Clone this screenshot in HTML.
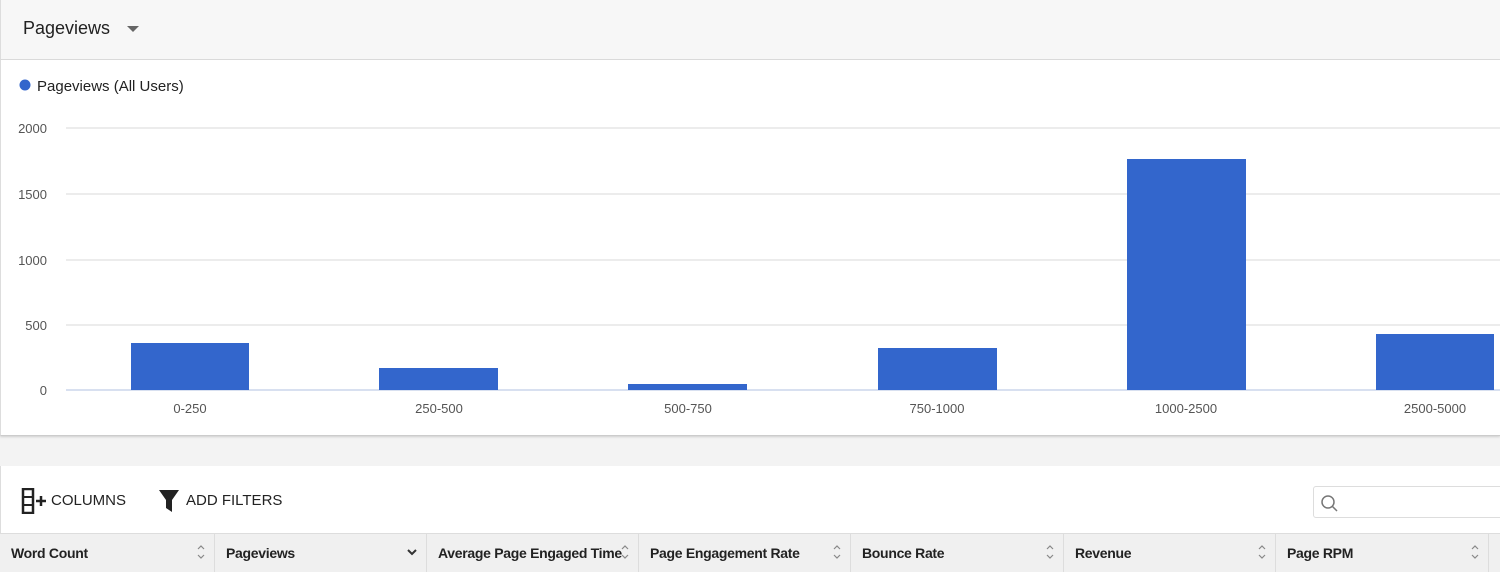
<!DOCTYPE html>
<html><head><style>
*{box-sizing:border-box;margin:0;padding:0}
html,body{width:1500px;height:572px;overflow:hidden}
body{background:#f3f3f3;font-family:"Liberation Sans",sans-serif;position:relative;color:#222}
.top{position:absolute;left:0;top:0;width:1500px;height:60px;background:#f7f7f7;border-bottom:1px solid #ddd;border-left:1px solid #ddd}
.top span{position:absolute;left:22px;top:18px;font-size:18px;color:#222}
.tri{position:absolute;left:126px;top:26px;width:0;height:0;border-left:6px solid transparent;border-right:6px solid transparent;border-top:6px solid #666}
.chart{position:absolute;left:0;top:60px;width:1500px;height:376px;background:#fff;border-bottom:1px solid #ccc;border-left:1px solid #ddd;box-shadow:0 1px 2px rgba(0,0,0,.15)}
.card{position:absolute;left:0;top:466px;width:1500px;height:106px;background:#fff;border-left:1px solid #ddd}
.hdr{position:absolute;left:0;top:533px;width:1500px;height:39px;background:#f0f0f0;border-top:1px solid #ddd;overflow:hidden}
.col{position:absolute;top:0;height:39px;border-right:1px solid #ddd;font-size:14px;font-weight:bold;padding:11px 11px;color:#222;white-space:nowrap;overflow:hidden;letter-spacing:-0.3px}
.ar{position:absolute;right:9px;top:10px}
.btn{position:absolute;top:492px;font-size:15px;color:#222}
.search{position:absolute;left:1313px;top:486px;width:200px;height:32px;border:1px solid #ddd;border-radius:3px;background:#fff}
</style></head><body>
<div class="top"><span>Pageviews</span><div class="tri"></div></div>
<div class="chart">
<svg width="1500" height="376" style="position:absolute;left:0;top:0">
<circle cx="24" cy="25" r="5.5" fill="#3366cc"/>
<text x="36" y="31" font-size="15" fill="#222" font-family="Liberation Sans">Pageviews (All Users)</text>
<g stroke="#e6e6e6" stroke-width="1.5">
<line x1="65" y1="68" x2="1500" y2="68"/><line x1="65" y1="134" x2="1500" y2="134"/><line x1="65" y1="200" x2="1500" y2="200"/><line x1="65" y1="265" x2="1500" y2="265"/></g>
<line x1="65" y1="330" x2="1500" y2="330" stroke="#ccd6eb" stroke-width="1.5"/>
<g font-size="13" fill="#555" font-family="Liberation Sans" text-anchor="end">
<text x="46" y="73">2000</text><text x="46" y="139">1500</text><text x="46" y="205">1000</text><text x="46" y="270">500</text><text x="46" y="335">0</text></g>
<g fill="#3366cc">
<rect x="130" y="283" width="118" height="47"/><rect x="378" y="308" width="119" height="22"/><rect x="627" y="324" width="119" height="6"/><rect x="877" y="288" width="119" height="42"/><rect x="1126" y="99" width="119" height="231"/><rect x="1375" y="274" width="118" height="56"/></g>
<g font-size="13" fill="#555" font-family="Liberation Sans" text-anchor="middle">
<text x="189" y="353">0-250</text><text x="438" y="353">250-500</text><text x="687" y="353">500-750</text><text x="936" y="353">750-1000</text><text x="1185" y="353">1000-2500</text><text x="1434" y="353">2500-5000</text></g>
</svg></div>
<div class="card"></div>
<svg style="position:absolute;left:20px;top:488px" width="30" height="26"><rect x="3" y="1" width="10" height="24" fill="none" stroke="#222" stroke-width="2.5"/><line x1="3" y1="9" x2="13" y2="9" stroke="#222" stroke-width="2"/><line x1="3" y1="17" x2="13" y2="17" stroke="#222" stroke-width="2"/><path d="M16 13h10M21 8v10" stroke="#222" stroke-width="2.5"/></svg>
<div class="btn" style="left:51px">COLUMNS</div>
<svg style="position:absolute;left:158px;top:489px" width="22" height="24"><path d="M1 1h20l-7 10v12l-6-4v-8z" fill="#222"/></svg>
<div class="btn" style="left:186px">ADD FILTERS</div>
<div class="search"><svg width="20" height="20" style="position:absolute;left:6px;top:7px"><circle cx="8" cy="8" r="6" fill="none" stroke="#777" stroke-width="1.5"/><line x1="12" y1="12" x2="17" y2="17" stroke="#777" stroke-width="1.5"/></svg></div>
<div class="hdr">
<div class="col" style="left:0;width:215px">Word Count<svg class="ar" width="8" height="16"><path d="M1 5l3-3 3 3M1 11l3 3 3-3" fill="none" stroke="#888" stroke-width="1.2"/></svg></div>
<div class="col" style="left:215px;width:212px">Pageviews<svg class="ar" width="10" height="16"><path d="M1 6l4 4 4-4" fill="none" stroke="#333" stroke-width="2"/></svg></div>
<div class="col" style="left:427px;width:212px">Average Page Engaged Time<svg class="ar" width="8" height="16"><path d="M1 5l3-3 3 3M1 11l3 3 3-3" fill="none" stroke="#888" stroke-width="1.2"/></svg></div>
<div class="col" style="left:639px;width:212px">Page Engagement Rate<svg class="ar" width="8" height="16"><path d="M1 5l3-3 3 3M1 11l3 3 3-3" fill="none" stroke="#888" stroke-width="1.2"/></svg></div>
<div class="col" style="left:851px;width:213px">Bounce Rate<svg class="ar" width="8" height="16"><path d="M1 5l3-3 3 3M1 11l3 3 3-3" fill="none" stroke="#888" stroke-width="1.2"/></svg></div>
<div class="col" style="left:1064px;width:212px">Revenue<svg class="ar" width="8" height="16"><path d="M1 5l3-3 3 3M1 11l3 3 3-3" fill="none" stroke="#888" stroke-width="1.2"/></svg></div>
<div class="col" style="left:1276px;width:213px">Page RPM<svg class="ar" width="8" height="16"><path d="M1 5l3-3 3 3M1 11l3 3 3-3" fill="none" stroke="#888" stroke-width="1.2"/></svg></div>
</div>
</body></html>
